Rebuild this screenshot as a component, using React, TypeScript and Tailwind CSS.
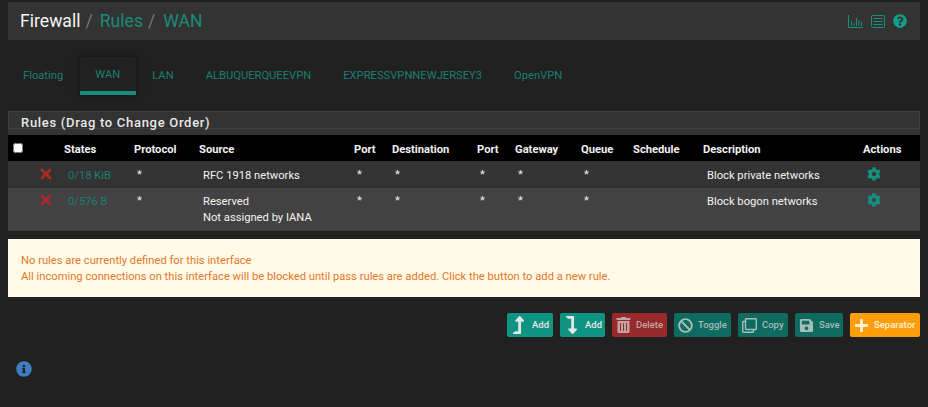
import { FaCog, FaTimes, FaLevelUpAlt, FaLevelDownAlt, FaTrashAlt, FaBan, FaRegClone, FaSave, FaPlus, FaInfoCircle, FaQuestionCircle } from "react-icons/fa";
import type { ReactNode } from "react";

function Rule({ states, source, desc, tall }: { states: string; source: ReactNode; desc: string; tall?: boolean }) {
  const row = tall ? "bg-[#424242] h-[43px]" : "bg-[#333333] h-[27px]";
  const text = `pl-[9px] leading-[16px] ${tall ? "pt-[6px] pb-[4px]" : "pt-[7px]"}`;
  const star = `pl-[8px] ${tall ? "pt-[5px]" : "pt-[6px]"}`;
  const Star = () => <td className={star}>*</td>;
  return (
    <tr className={`${row} align-top text-[#f2f2f2]`}>
      <td></td>
      <td className={tall ? "pt-[4px]" : "pt-[5px]"}><FaTimes className="ml-[2px] text-[16px] text-[#a82a2a]" /></td>
      <td className={`${text} text-[#1b7f70]`}>{states}</td>
      <Star />
      <td className={text}>{source}</td>
      <Star />
      <Star />
      <Star />
      <Star />
      <Star />
      <td></td>
      <td className={text}>{desc}</td>
      <td className={`pl-[9px] ${tall ? "pt-[5px]" : "pt-[6px]"}`}><FaCog className="text-[14px] text-[#14907e]" /></td>
    </tr>
  );
}

function Btn({ icon, label, bg, width, text = "text-[#e6e6e6]", gap = "gap-[5px]", size = "text-[15px]" }: { icon: ReactNode; label: string; bg: string; width: string; text?: string; gap?: string; size?: string }) {
  return (
    <button className={`${bg} ${text} ${width} ${gap} flex h-[24px] items-center rounded-[2px] pl-[4px] text-[9.5px] font-medium whitespace-nowrap`}>
      <span className={`flex w-[15px] justify-center ${size}`}>{icon}</span>
      {label}
    </button>
  );
}

export default function App() {
  const heads = ["", "", "States", "Protocol", "Source", "Port", "Destination", "Port", "Gateway", "Queue", "Schedule", "Description", "Actions"];
  const widths = [28, 23, 70, 65, 155, 38, 85, 38, 66, 52, 70, 160, 62];
  return (
    <div className="h-[407px] w-[928px] overflow-hidden bg-[#212121] px-[8px] pt-[2px] text-[11.2px] [font-family:Roboto,sans-serif]">
      <header className="flex h-[38px] items-center justify-between bg-[#333333] pl-[12px] pr-[13px] text-[17.6px]">
        <div className="flex gap-[5px]">
          <span className="text-[#f5f5f5]">Firewall</span>
          <span className="text-[#777]">/</span>
          <span className="ml-[2px] text-[#1b8a79]">Rules</span>
          <span className="text-[#777]">/</span>
          <span className="ml-[3px] text-[#1b8a79]">WAN</span>
        </div>
        <div className="flex items-center gap-[8px] text-[#14907e]">
          <svg width="15" height="13" viewBox="0 0 15 13" fill="none" stroke="currentColor" strokeWidth="1">
            <path d="M.5 0v12.5H15M3.5 6v5M6 8v3M8.5 3v8M11 5v6M13.5 7v4" />
          </svg>
          <svg width="14" height="13" viewBox="0 0 14 13" fill="none" stroke="currentColor" strokeWidth="1">
            <rect x=".5" y=".5" width="13" height="12" rx="1" />
            <path d="M2.5 3.5h9M2.5 6.5h9M2.5 9.5h9" />
          </svg>
          <FaQuestionCircle className="text-[14px] text-[#12a08c]" />
        </div>
      </header>

      <nav className="mt-[17px] flex h-[38px] text-[#1b7f70]">
        <a className="flex items-center pl-[15px] pr-[17px] pt-[1px]">Floating</a>
        <a className="flex w-[56px] items-center justify-center border-b-[4px] border-[#14907e] pr-[1px] pt-[3px] shadow-[0_0_6px_rgba(0,0,0,0.5)]">WAN</a>
        <a className="flex items-center px-[16px] pt-[1px]">LAN</a>
        <a className="flex items-center px-[16px] pt-[1px]">ALBUQUERQUEEVPN</a>
        <a className="flex items-center px-[16px] pt-[1px]">EXPRESSVPNNEWJERSEY3</a>
        <a className="flex items-center px-[16px] pt-[1px]">OpenVPN</a>
      </nav>

      <section className="mt-[16px] bg-[#333333]">
        <h2 className="mb-[6px] h-[18px] border border-[#404040] pl-[12px] text-[13px] leading-[22px] font-medium tracking-[0.7px] text-[#e8e8e8]">Rules (Drag to Change Order)</h2>
        <table className="w-full table-fixed border-collapse">
          <colgroup>{widths.map((w, i) => <col key={i} style={{ width: w }} />)}</colgroup>
          <thead>
            <tr className="h-[26px] bg-black text-left text-[#f2f2f2]">
              {heads.map((h, i) => (
                <th key={i} className="pl-[5px] pt-[5px] align-middle font-bold">
                  {i === 0 ? <input type="checkbox" className="mb-[5px] block h-[10px] w-[10px]" /> : h}
                </th>
              ))}
            </tr>
          </thead>
          <tbody>
            <Rule states="0/18 KiB" source="RFC 1918 networks" desc="Block private networks" />
            <Rule tall states="0/576 B" source={<>Reserved<br />Not assigned by IANA</>} desc="Block bogon networks" />
          </tbody>
        </table>
      </section>

      <div className="mt-[8px] flex h-[58px] flex-col justify-center bg-[#fffbe6] pl-[13px] pt-[2px] leading-[16px] text-[#e5762c]">
        <p>No rules are currently defined for this interface</p>
        <p>All incoming connections on this interface will be blocked until pass rules are added. Click the button to add a new rule.</p>
      </div>

      <div className="mt-[16px] flex justify-end gap-[7px]">
        <Btn width="w-[46px]" gap="gap-[6px]" size="text-[18px]" bg="bg-[#0f9484]" icon={<FaLevelUpAlt />} label="Add" />
        <Btn width="w-[45px]" gap="gap-[6px]" size="text-[18px]" bg="bg-[#0f9484]" icon={<FaLevelDownAlt />} label="Add" />
        <Btn width="w-[55px]" size="text-[16px]" bg="bg-[#982a2e]" text="text-[#c0a3a3]" icon={<FaTrashAlt />} label="Delete" />
        <Btn width="w-[57px]" bg="bg-[#0f6a5f]" text="text-[#a3bdb9]" icon={<FaBan />} label="Toggle" />
        <Btn width="w-[50px]" bg="bg-[#0f6a5f]" text="text-[#a3bdb9]" icon={<FaRegClone />} label="Copy" />
        <Btn width="w-[48px]" bg="bg-[#0f6a5f]" text="text-[#a3bdb9]" icon={<FaSave />} label="Save" />
        <Btn width="w-[70px]" bg="bg-[#ff9d0a]" text="text-[#fff3d8]" icon={<FaPlus />} label="Separator" />
      </div>

      <FaInfoCircle className="mt-[24px] ml-[8px] text-[16px] text-[#3f7cc0]" />
    </div>
  );
}
